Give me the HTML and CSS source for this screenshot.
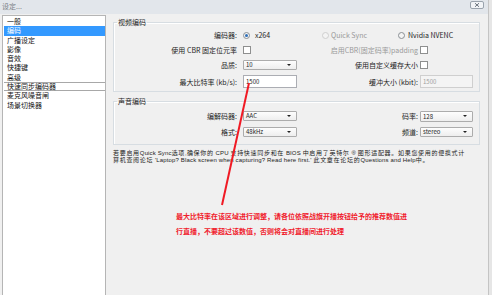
FILE: index.html
```html
<!DOCTYPE html>
<html lang="zh-CN">
<head>
<meta charset="utf-8">
<title>设定</title>
<link rel="stylesheet" href="styles.css">
</head>
<body>
<div class="window">
  <div class="titlebar">
    <span class="title">设定...</span>
    <span class="close"><svg width="14" height="8" viewBox="0 0 14 8"><rect x="0.5" y="0.5" width="13" height="7" rx="1.5" fill="#f2f4f7" stroke="#9aa3ad"/><path d="M5 2.2 L9 5.8 M9 2.2 L5 5.8" stroke="#6d7680" stroke-width="1"/></svg></span>
  </div>
  <div class="main">
    <ul class="nav">
      <li>一般</li>
      <li class="sel">编码</li>
      <li>广播设定</li>
      <li>影像</li>
      <li>音效</li>
      <li>快捷键</li>
      <li>高级</li>
      <li class="focus">快速同步编码器</li>
      <li>麦克风噪音闸</li>
      <li>场景切换器</li>
    </ul>
    <div class="content">
      <fieldset class="group video">
        <legend>视频编码</legend>
        <div class="grid">
          <span class="lbl">编码器:</span>
          <div class="radios">
            <span class="radio-item r1"><span class="radio checked"></span>x264</span>
            <span class="radio-item r2 disabled"><span class="radio off"></span>Quick Sync</span>
            <span class="radio-item r3"><span class="radio"></span>Nvidia NVENC</span>
          </div>

          <span class="lbl">使用 CBR 固定位元率</span>
          <span class="ctrl"><span class="check"></span></span>
          <span class="rlbl disabled">启用CBR(固定码率)padding</span>
          <span class="ctrl"><span class="check"></span></span>

          <span class="lbl">品质:</span>
          <span class="select">10</span>
          <span class="rlbl">使用自定义缓存大小</span>
          <span class="ctrl"><span class="check"></span></span>

          <span class="lbl">最大比特率 (kb/s):</span>
          <span class="input">1500</span>
          <span class="rlbl">缓冲大小 (kbit):</span>
          <span class="input dis">1500</span>
        </div>
      </fieldset>

      <fieldset class="group audio">
        <legend>声音编码</legend>
        <div class="grid agrid">
          <span class="lbl">编解码器:</span>
          <span class="select">AAC</span>
          <span class="rlbl">码率:</span>
          <span class="select">128</span>

          <span class="lbl">格式:</span>
          <span class="select">48kHz</span>
          <span class="rlbl">频道:</span>
          <span class="select">stereo</span>
        </div>
      </fieldset>

      <div class="note">
        <div class="note-line">若要启用<span class="en">Quick Sync</span>选项<span class="en">,</span>确保你的<span class="en"> CPU </span>支持快速同步和在<span class="en"> BIOS </span>中启用了英特尔<span class="en"> ® </span>图形适配器。如果您使用的便携式计</div>
        <div class="note-line">算机查阅论坛<span class="en"> 'Laptop? Black screen when capturing? Read here first.' </span>此文章在论坛的<span class="en">Questions and Help</span>中。</div>
      </div>

      <p class="annot">最大比特率在该区域进行调整，请各位依照战旗开播按钮给予的推荐数值进<br>行直播，不要超过该数值，否则将会对直播间进行处理</p>
    </div>
  </div>
  <svg class="arrow" width="492" height="295" viewBox="0 0 492 295"><line x1="249" y1="83" x2="222" y2="205" stroke="#f01a24" stroke-width="2"/></svg>
</div>
</body>
</html>
```

FILE: styles.css
```css
html, body {
  margin: 0;
  padding: 0;
}
body {
  width: 492px;
  height: 295px;
  overflow: hidden;
  background: #e6e6e6;
  font-family: "Noto Sans CJK SC", "Noto Sans", sans-serif;
  font-size: 7px;
  color: #1e1e1e;
}
.window {
  position: relative;
  width: 488px;
  height: 295px;
  background: #f0f0f0;
  border-right: 1px solid #c4c4c4;
}
.titlebar {
  height: 14px;
  display: flex;
  align-items: center;
  justify-content: space-between;
  background: #e2e6eb;
  padding: 0 3px 0 2px;
}
.title {
  color: #7a7f86;
  font-size: 7px;
  line-height: 8px;
  margin-top: -3px;
}
.close {
  display: flex;
  margin-top: -4px;
  margin-right: 1px;
}
.main {
  display: flex;
  align-items: flex-start;
}
.nav {
  list-style: none;
  margin: 1px 0 0 2px;
  padding: 1px 0 0;
  width: 102px;
  height: 290px;
  background: #fff;
  border: 1px solid #b5b5b5;
  border-bottom: none;
}
.nav li {
  height: 9.3px;
  line-height: 9.3px;
  margin: 0 0 0 1px;
  padding-left: 3px;
  box-sizing: border-box;
  color: #111;
  font-size: 7px;
}
.nav li.sel {
  background: #3399ff;
  color: #fff;
}
.nav li.focus {
  border-top: 1px solid #a8a8a8;
  border-bottom: 1px solid #a8a8a8;
  line-height: 7.3px;
}
.content {
  margin-left: 7px;
  width: 367px;
  padding-top: 4px;
}
.group {
  margin: 0;
  padding: 4px 0 3px;
  border: 1px solid #d7dde2;
  box-shadow: inset 1px 1px 0 #fff;
}
.group legend {
  font-size: 7px;
  line-height: 8px;
  padding: 0 1px;
  margin-left: 3px;
}
.group.audio {
  margin-top: 5px;
  padding: 6px 0 7px;
}
.grid {
  display: grid;
  grid-template-columns: 129px 54px 123px 53px;
  grid-template-rows: 10px 10px 10px 13px;
  row-gap: 5px;
  align-items: center;
}
.agrid {
  grid-template-rows: 10px 11px;
}
.lbl {
  text-align: right;
  padding-right: 6px;
  white-space: nowrap;
  line-height: 8px;
}
.rlbl {
  text-align: right;
  padding-right: 2px;
  white-space: nowrap;
  line-height: 8px;
}
.disabled {
  color: #9a9a9a;
}
.radios {
  grid-column: 2 / 5;
  position: relative;
  height: 10px;
}
.radio-item {
  position: absolute;
  top: 1px;
  display: flex;
  align-items: center;
  gap: 5px;
  line-height: 8px;
}
.r1 { left: 0; }
.r2 { left: 79px; gap: 2px; }
.r3 { left: 155px; gap: 3px; }
.radio {
  width: 5px;
  height: 5px;
  border-radius: 50%;
  border: 1px solid #8a8f94;
  background: #f4f4f4;
  box-sizing: content-box;
  position: relative;
}
.radio.checked::after {
  content: "";
  position: absolute;
  left: 1px;
  top: 1px;
  width: 3px;
  height: 3px;
  border-radius: 50%;
  background: #2f6fb8;
}
.radio.off {
  border-color: #cfcfcf;
  background: #f4f4f4;
}
.ctrl {
  display: flex;
  align-items: center;
}
.check {
  width: 6px;
  height: 6px;
  border: 1px solid #8e8f8f;
  background: #fff;
}
.select {
  position: relative;
  height: 10px;
  box-sizing: border-box;
  border: 1px solid #acacac;
  border-radius: 1px;
  background: linear-gradient(#fdfdfd, #eeeeee);
  font-size: 6px;
  line-height: 8px;
  padding-left: 2px;
}
.agrid .select:nth-of-type(3),
.agrid .select:nth-of-type(4) {
  height: 11px;
  line-height: 9px;
}
.select::after {
  content: "";
  position: absolute;
  right: 5px;
  top: 50%;
  margin-top: -1px;
  border-left: 2px solid transparent;
  border-right: 2px solid transparent;
  border-top: 2px solid #222;
}
.input {
  height: 13px;
  box-sizing: border-box;
  border: 1px solid #abadb3;
  background: #fff;
  font-size: 6px;
  line-height: 11px;
  padding-left: 2px;
}
.input.dis {
  background: #f4f4f4;
  border-color: #cfcfcf;
  color: #a0a0a0;
}
.note {
  margin: 5px 0 0;
  display: flex;
  flex-direction: column;
  color: #222;
}
.note-line {
  font-family: "Liberation Sans", "Noto Sans CJK SC", sans-serif;
  font-size: 6px;
  letter-spacing: 0.7px;
  line-height: 7px;
  height: 7px;
  white-space: nowrap;
}
.note-line .en {
  letter-spacing: 0.15px;
}
.annot {
  margin: 45px 0 0 63px;
  font-size: 7px;
  line-height: 14.5px;
  font-weight: bold;
  color: #f0202c;
  white-space: nowrap;
}
.arrow {
  position: absolute;
  left: 0;
  top: 0;
  pointer-events: none;
}
```
